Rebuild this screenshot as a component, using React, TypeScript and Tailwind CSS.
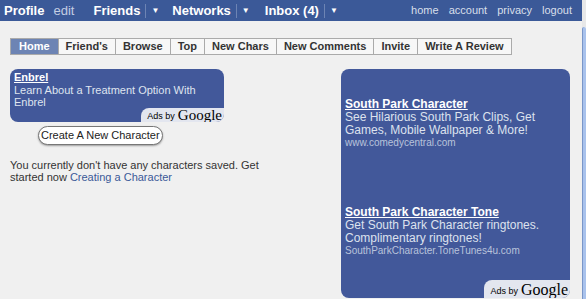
import React from 'react';

const tabs = ['Home', "Friend's", 'Browse', 'Top', 'New Chars', 'New Comments', 'Invite', 'Write A Review'];

const AdsByGoogle: React.FC<{ big?: boolean }> = ({ big }) => (
  <div
    className={`flex items-end gap-[3px] bg-[#e3e6ef] rounded-tl-lg pl-[6px] pr-[2px] ${big ? 'h-[18px]' : 'h-[15px]'}`}
  >
    <span className="text-[9px] leading-[13px] text-black font-['Liberation_Sans',sans-serif]">Ads by</span>
    <span className={`${big ? 'text-[16px]' : 'text-[15px]'} leading-[16px] text-black font-['Liberation_Serif',serif]`}>Google</span>
  </div>
);

const NavDrop: React.FC<{ label: string }> = ({ label }) => (
  <div className="flex items-center">
    <span className="font-bold text-white text-[13px]">{label}</span>
    <span className="ml-[5px] h-[14px] border-l border-[#6d84b4]" />
    <span className="ml-[5px] text-[8px] text-white">▼</span>
  </div>
);

const App: React.FC = () => {
  return (
    <div className="flex w-[586px] h-[299px] overflow-hidden bg-[#f0f0f0] font-['Liberation_Sans',sans-serif]">
      <div className="w-[582px] flex flex-col">
        {/* top nav */}
        <div className="h-[21px] bg-[#3b5998] flex items-center pl-[4px] pr-[10px]">
          <span className="font-bold text-white text-[13px]">Profile</span>
          <span className="ml-[9px] text-[13px] text-[#c3cde3]">edit</span>
          <div className="ml-[19px]"><NavDrop label="Friends" /></div>
          <div className="ml-[13px]"><NavDrop label="Networks" /></div>
          <div className="ml-[15px]"><NavDrop label="Inbox (4)" /></div>
          <div className="ml-auto flex gap-[10px] text-[11px] text-[#d8dfea]">
            <span>home</span>
            <span>account</span>
            <span>privacy</span>
            <span>logout</span>
          </div>
        </div>

        {/* tabs */}
        <div className="mt-[17px] ml-[10px] flex">
          {tabs.map((t, i) => (
            <div
              key={t}
              className={`h-[17px] px-[7px] text-[11px] leading-[15px] font-bold border border-[#aaaaaa] ${i > 0 ? 'border-l-0' : ''} ${
                i === 0 ? 'bg-[#6d84b4] text-white border-[#3b5998] px-[8px]' : 'bg-[#f7f7f7] text-[#333]'
              }`}
            >
              {t}
            </div>
          ))}
        </div>

        <div className="flex mt-[14px]">
          {/* left column */}
          <div className="w-[341px] pl-[10px]">
            <div className="w-[214px] h-[53px] bg-[#42589a] rounded-lg flex flex-col overflow-hidden">
              <div className="px-[4px] pt-[2px]">
                <div className="text-[11px] leading-[13px] font-bold text-white underline">Enbrel</div>
                <div className="w-[190px] text-[11px] leading-[12px] text-[#dfe4ef]">
                  Learn About a Treatment Option With Enbrel
                </div>
              </div>
              <div className="mt-auto flex justify-end">
                <AdsByGoogle />
              </div>
            </div>
            <button className="mt-[2px] ml-[28px] h-[19px] px-[2px] rounded-full border border-[#777] bg-white text-[11px] leading-[15px] text-[#222] shadow-[0_1px_2px_rgba(0,0,0,0.35)]">
              Create A New Character
            </button>
            <div className="mt-[13px] text-[11px] leading-[12px] text-[#333]">
              <div>You currently don't have any characters saved. Get</div>
              <div className="flex gap-[3px]">
                <span>started now</span>
                <span className="text-[#3b5998]">Creating a Character</span>
              </div>
            </div>
          </div>

          {/* right ad */}
          <div className="w-[229px] h-[229px] bg-[#42589a] rounded-lg flex flex-col overflow-hidden">
            <div className="px-[4px] pt-[29px] text-[12px] leading-[13px]">
              <div className="font-bold text-white underline">South Park Character</div>
              <div className="text-[#dde2ee]">See Hilarious South Park Clips, Get Games, Mobile Wallpaper &amp; More!</div>
              <div className="text-[10px] leading-[12px] text-[#b9c3da]">www.comedycentral.com</div>
            </div>
            <div className="px-[4px] pt-[57px] text-[12px] leading-[13px]">
              <div className="font-bold text-white underline">South Park Character Tone</div>
              <div className="text-[#dde2ee]">Get South Park Character ringtones. Complimentary ringtones!</div>
              <div className="text-[10px] leading-[12px] text-[#b9c3da]">SouthParkCharacter.ToneTunes4u.com</div>
            </div>
            <div className="mt-auto flex justify-end">
              <AdsByGoogle big />
            </div>
          </div>
        </div>
      </div>

      {/* window edge */}
      <div className="w-[4px] flex flex-col">
        <div className="h-[27px] bg-[#e8e8e8]" />
        <div className="flex-1 rounded-t-sm border-l border-[#7a96c8] bg-[#a9c2ec]" />
      </div>
    </div>
  );
};

export default App;
